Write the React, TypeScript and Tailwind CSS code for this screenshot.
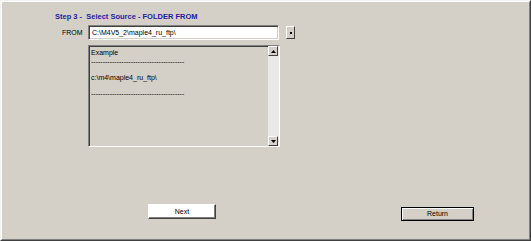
import React from "react";

const sunken =
  "border border-t-[#808080] border-l-[#808080] border-r-white border-b-white shadow-[inset_1px_1px_0_#404040,inset_-1px_-1px_0_#d4d0c8]";

const Dashes = () => (
  <div className="h-[9px] overflow-hidden whitespace-nowrap leading-[9px]">
    {"-".repeat(40)}
  </div>
);

export default function App() {
  return (
    <div
      className="relative h-[241px] w-[531px] bg-[#d4d0c8] text-[7px] text-black"
      style={{ fontFamily: '"Liberation Sans", Arial, sans-serif' }}
    >
      <div className="h-full w-full border border-t-[#f4f3f0] border-l-[#f4f3f0] border-r-[#404040] border-b-[#404040]">
        <div className="h-full w-full border border-t-white border-l-white border-r-[#808080] border-b-[#808080] pl-[53px] pt-[10px]">
          <div className="text-[7.5px] font-bold leading-[10px] text-[#1c1c9e]">
            Step 3 -&nbsp; Select Source - FOLDER FROM
          </div>

          <div className="mt-[3px] flex items-start">
            <div className="w-[33px] pl-[7px] pt-[4px] leading-[8px]">FROM</div>
            <div className={`h-[15px] w-[191px] bg-white pl-[3px] pt-[3px] leading-[8px] ${sunken}`}>
              C:\M4V5_2\maple4_ru_ftp\
            </div>
            <div className="ml-[7px] mt-[1px] flex h-[13px] w-[9px] items-center justify-center border border-t-white border-l-white border-r-[#404040] border-b-[#404040] bg-[#d4d0c8]">
              <div className="h-[2px] w-[2px] bg-black" />
            </div>
          </div>

          <div className="ml-[33px] mt-[5px] flex h-[102px] w-[192px]">
            <div className={`flex h-full w-full ${sunken} bg-[#d4d0c8]`}>
              <div className="flex-1 pl-[2px] pt-[2px] leading-[9px]">
                <div>Example</div>
                <Dashes />
                <div className="h-[7px]" />
                <div>c:\m4\maple4_ru_ftp\</div>
                <div className="h-[7px]" />
                <Dashes />
              </div>
              <div className="flex w-[11px] flex-col bg-[#ebe9e5]">
                <div className="flex h-[10px] w-[10px] items-center justify-center border border-t-white border-l-white border-r-[#404040] border-b-[#404040] bg-[#d4d0c8]">
                  <svg width="5" height="3" viewBox="0 0 5 3">
                    <path d="M2.5 0 L5 3 L0 3 Z" fill="#000" />
                  </svg>
                </div>
                <div className="flex-1" />
                <div className="flex h-[10px] w-[10px] items-center justify-center border border-t-white border-l-white border-r-[#404040] border-b-[#404040] bg-[#d4d0c8]">
                  <svg width="5" height="3" viewBox="0 0 5 3">
                    <path d="M0 0 L5 0 L2.5 3 Z" fill="#000" />
                  </svg>
                </div>
              </div>
            </div>
          </div>

          <div className="mt-[57px] flex items-start">
            <button className="ml-[93px] flex h-[15px] w-[68px] items-center justify-center border border-t-white border-l-white border-r-[#404040] border-b-[#404040] bg-white leading-[8px] shadow-[inset_-1px_-1px_0_#808080]">
              Next
            </button>
            <button className="ml-[185px] mt-[3px] flex h-[14px] w-[73px] items-center justify-center border border-black bg-[#d4d0c8] leading-[8px] shadow-[inset_1px_1px_0_#fff,inset_-1px_-1px_0_#808080]">
              Return
            </button>
          </div>
        </div>
      </div>
    </div>
  );
}
